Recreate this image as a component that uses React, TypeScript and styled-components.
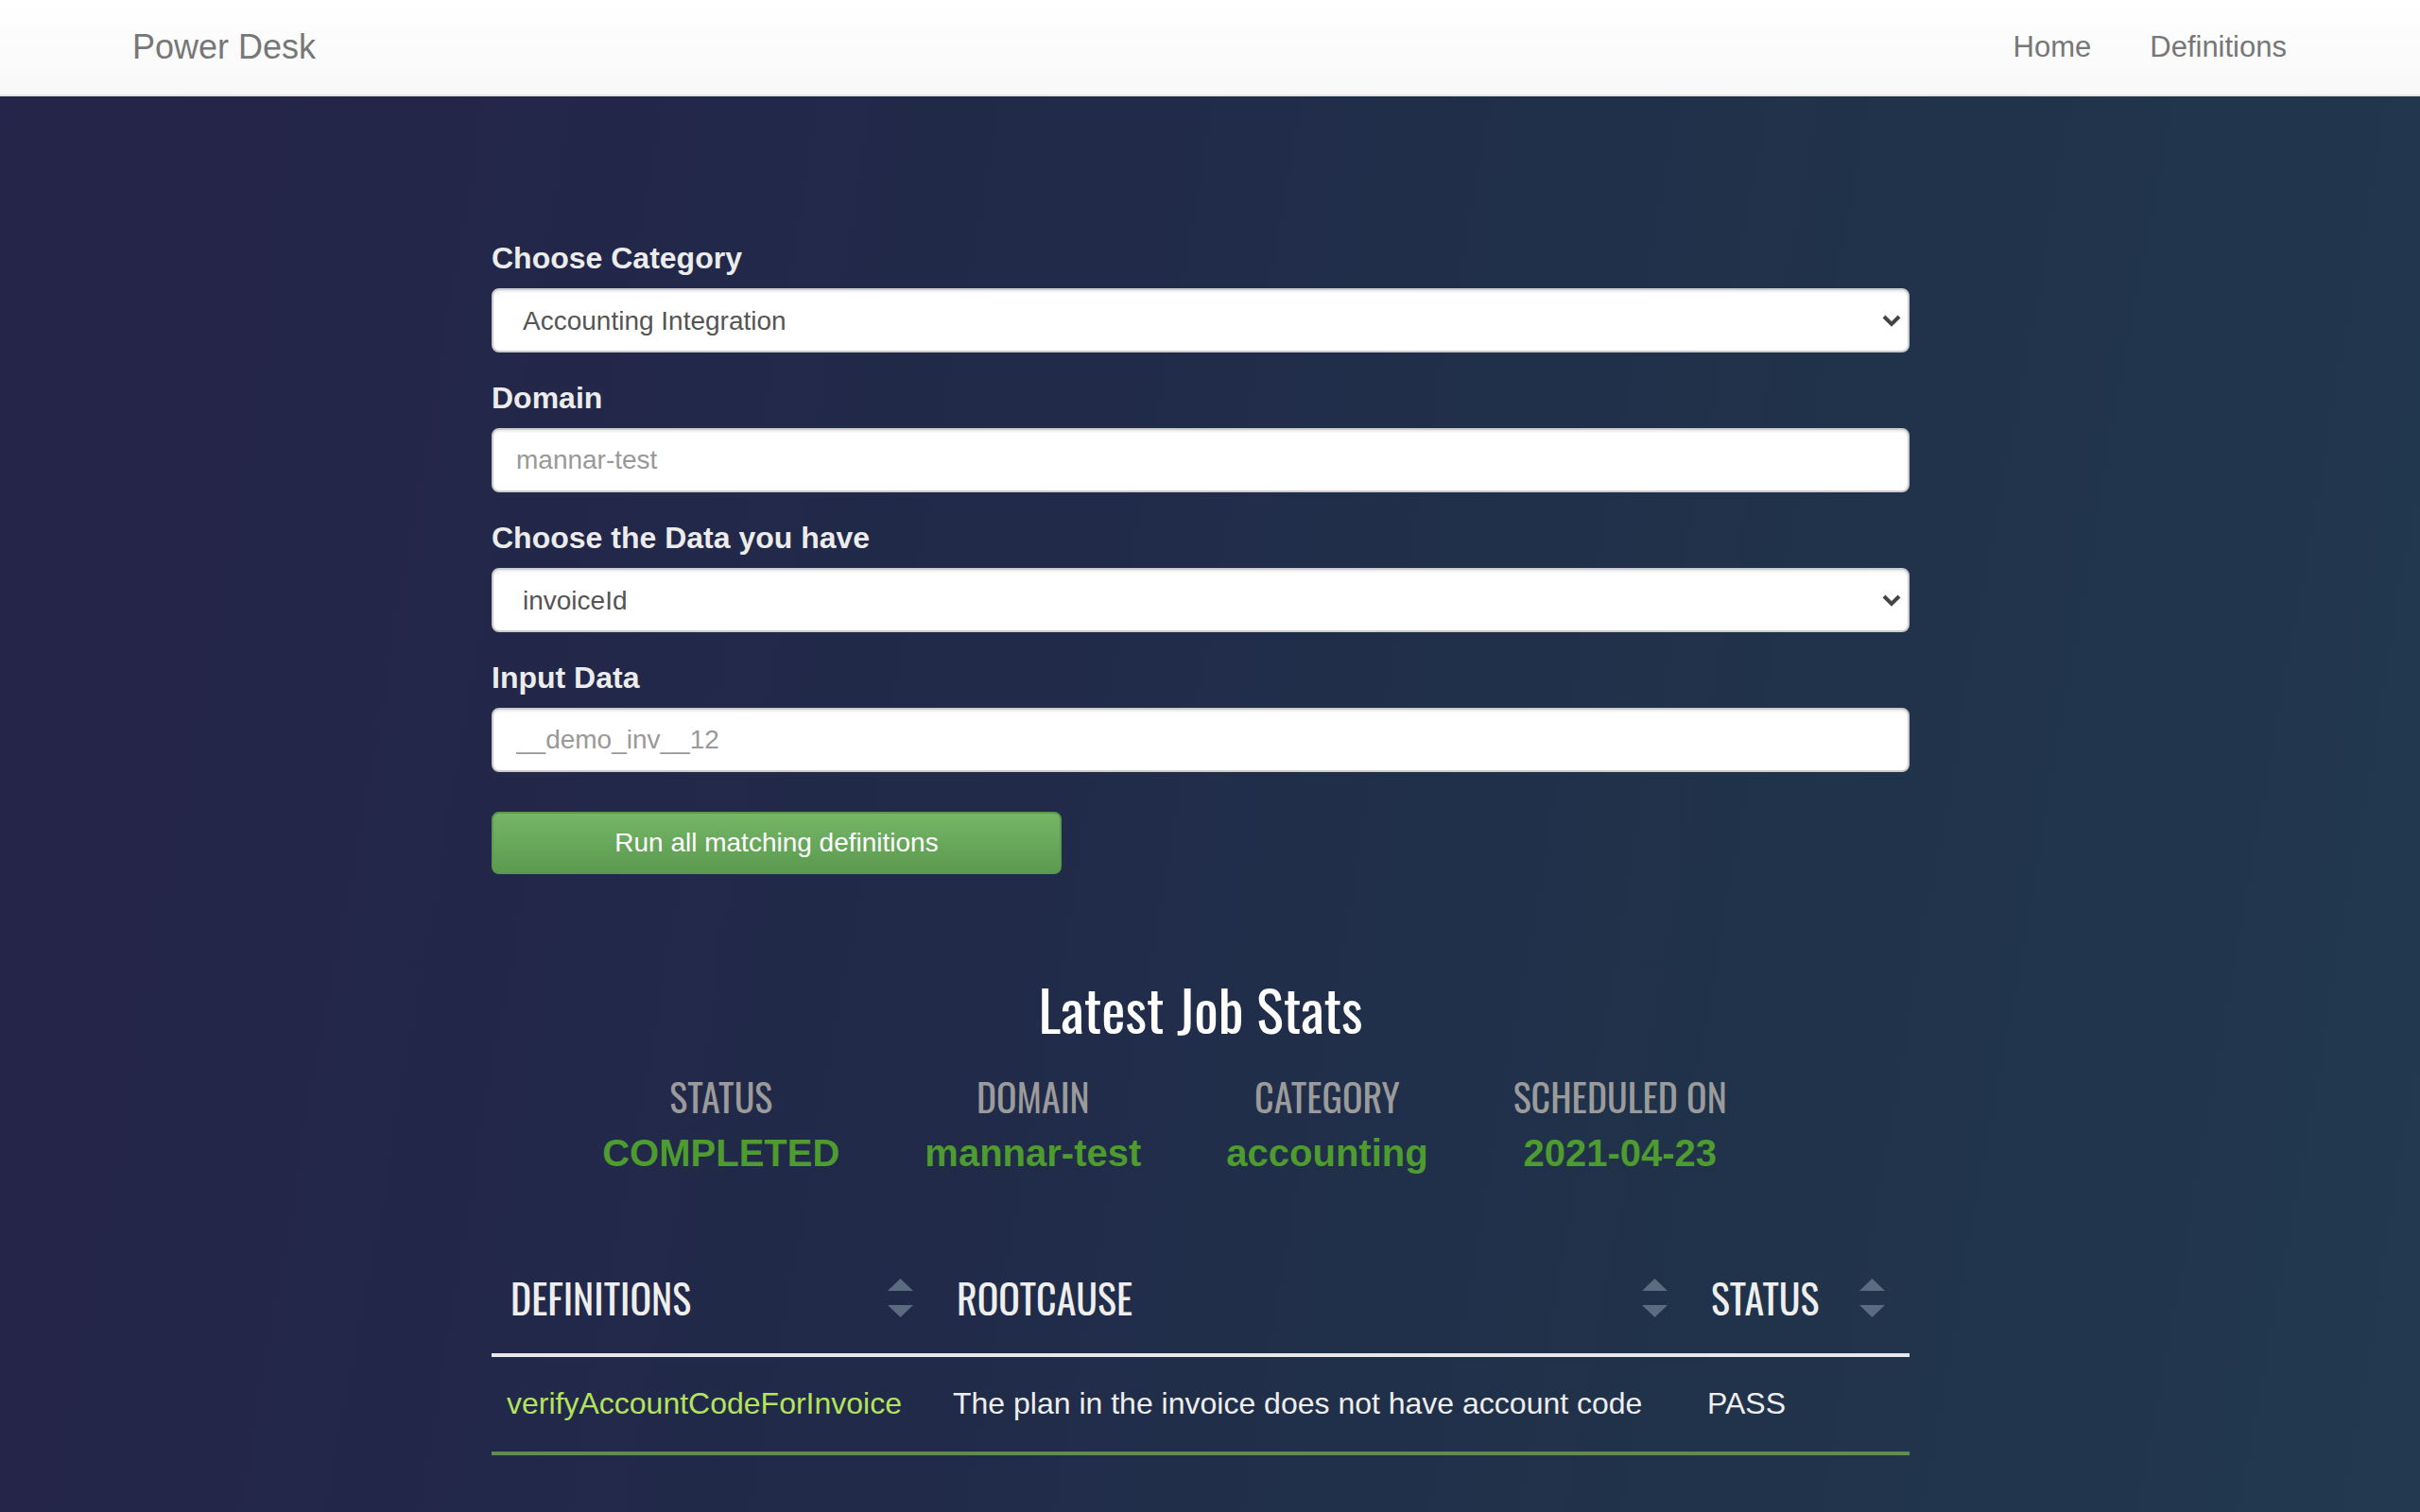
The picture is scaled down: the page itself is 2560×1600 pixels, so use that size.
import React from 'react';
import styled, { createGlobalStyle } from 'styled-components';

const GlobalStyle = createGlobalStyle`
  html, body {
    margin: 0;
    padding: 0;
  }
  body {
    min-height: 100vh;
    font-family: "Liberation Sans", Arial, sans-serif;
    background: linear-gradient(100deg, #25244a 0%, #212a49 40%, #20324a 70%, #22394f 100%);
    background-attachment: fixed;
  }
  * {
    box-sizing: border-box;
  }
`;

const condensed = `"Oswald", "Liberation Sans Narrow", "Arial Narrow", "DejaVu Sans Condensed", sans-serif`;

const NavBar = styled.nav`
  height: 102px;
  display: flex;
  align-items: center;
  justify-content: space-between;
  padding: 0 110px;
  background: linear-gradient(to bottom, #ffffff 0%, #f8f8f8 100%);
  border-bottom: 2px solid #e4e4e4;
`;

const Brand = styled.a`
  padding: 0 30px;
  font-size: 36px;
  color: #777;
  text-decoration: none;
`;

const NavLinks = styled.div`
  display: flex;
`;

const NavLink = styled.a`
  padding: 0 31px;
  font-size: 31px;
  color: #777;
  text-decoration: none;
`;

const Main = styled.main`
  padding: 149px 20px 0 0;
`;

const Container = styled.div`
  width: 1500px;
  margin: 0 auto;
`;

const FormGroup = styled.div`
  margin-bottom: 26px;
`;

const Label = styled.label`
  display: block;
  margin-bottom: 10px;
  font-size: 32px;
  line-height: 44px;
  font-weight: 700;
  color: #ececec;
`;

const controlBase = `
  width: 100%;
  height: 68px;
  border: 2px solid #cccccc;
  border-radius: 8px;
  background: #fff;
  box-shadow: inset 0 2px 2px rgba(0, 0, 0, 0.075);
  font-family: "Liberation Sans", Arial, sans-serif;
  font-size: 28px;
  color: #555;
  outline: none;
`;

const SelectWrap = styled.div`
  position: relative;
`;

const Select = styled.select`
  ${controlBase}
  appearance: none;
  -webkit-appearance: none;
  padding: 0 60px 0 31px;
`;

const Chevron = styled.svg`
  position: absolute;
  right: 9px;
  top: 27px;
  pointer-events: none;
`;

const Input = styled.input`
  ${controlBase}
  padding: 0 24px;
  &::placeholder {
    color: #999;
  }
`;

const RunButton = styled.button`
  display: block;
  width: 603px;
  height: 66px;
  margin-top: 42px;
  border: 2px solid #5b994f;
  border-radius: 8px;
  background: linear-gradient(to bottom, #75b667 0%, #5b9a4f 100%);
  color: #fff;
  font-family: "Liberation Sans", Arial, sans-serif;
  font-size: 28px;
  cursor: pointer;
`;

const StatsTitle = styled.h2`
  margin: 108px 0 0;
  text-align: center;
  font-family: ${condensed};
  font-weight: 400;
  font-size: 60px;
  line-height: 68px;
  color: #fff;
`;

const StatsRow = styled.div`
  display: flex;
  justify-content: center;
  margin-top: 34px;
  padding-left: 14px;
`;

const StatItem = styled.div`
  margin-right: 90px;
  text-align: center;
`;

const StatLabel = styled.div`
  font-family: ${condensed};
  font-size: 40px;
  line-height: 50px;
  color: #9b9b9b;
  text-transform: uppercase;
`;

const StatValue = styled.div`
  margin-top: 7px;
  font-size: 40px;
  line-height: 56px;
  font-weight: 700;
  color: #4e9b2f;
`;

const Table = styled.table`
  width: 100%;
  margin-top: 60px;
  border-collapse: collapse;
`;

const HeadCell = styled.th<{ $width: number }>`
  width: ${(p) => p.$width}px;
  padding: 40px 26px 34px 20px;
  border-bottom: 4px solid #e8e8e8;
  text-align: left;
  font-weight: 400;
`;

const HeadInner = styled.div`
  display: flex;
  align-items: center;
  justify-content: space-between;
  font-family: ${condensed};
  font-size: 42px;
  line-height: 50px;
  color: #eeeeee;
`;

const BodyCell = styled.td<{ $accent?: boolean }>`
  padding: 25px 16px 27px;
  border-bottom: 4px solid #628a55;
  font-size: 32px;
  line-height: 48px;
  color: ${(p) => (p.$accent ? '#b4e35c' : '#eeeeee')};
  white-space: nowrap;
`;

const SortIcon = () => (
  <svg width="27" height="41" viewBox="0 0 27 41">
    <polygon points="0,13 13.5,0 27,13" fill="#5b6b80" />
    <polygon points="0,28 27,28 13.5,41" fill="#5b6b80" />
  </svg>
);

const stats = [
  { label: 'Status', value: 'COMPLETED' },
  { label: 'Domain', value: 'mannar-test' },
  { label: 'Category', value: 'accounting' },
  { label: 'Scheduled On', value: '2021-04-23' },
];

const columns = [
  { title: 'DEFINITIONS', width: 472 },
  { title: 'ROOTCAUSE', width: 798 },
  { title: 'STATUS', width: 230 },
];

const ChevronIcon = () => (
  <Chevron width="20" height="14" viewBox="0 0 20 14">
    <polyline points="2,3 10,11 18,3" fill="none" stroke="#444" strokeWidth="4" />
  </Chevron>
);

const App: React.FC = () => (
  <>
    <GlobalStyle />
    <NavBar>
      <Brand href="#">Power Desk</Brand>
      <NavLinks>
        <NavLink href="#">Home</NavLink>
        <NavLink href="#">Definitions</NavLink>
      </NavLinks>
    </NavBar>
    <Main>
      <Container>
        <FormGroup>
          <Label>Choose Category</Label>
          <SelectWrap>
            <Select defaultValue="accounting">
              <option value="accounting">Accounting Integration</option>
            </Select>
            <ChevronIcon />
          </SelectWrap>
        </FormGroup>
        <FormGroup>
          <Label>Domain</Label>
          <Input placeholder="mannar-test" />
        </FormGroup>
        <FormGroup>
          <Label>Choose the Data you have</Label>
          <SelectWrap>
            <Select defaultValue="invoiceId">
              <option value="invoiceId">invoiceId</option>
            </Select>
            <ChevronIcon />
          </SelectWrap>
        </FormGroup>
        <FormGroup>
          <Label>Input Data</Label>
          <Input placeholder="__demo_inv__12" />
        </FormGroup>
        <RunButton type="button">Run all matching definitions</RunButton>

        <StatsTitle>Latest Job Stats</StatsTitle>
        <StatsRow>
          {stats.map((s) => (
            <StatItem key={s.label}>
              <StatLabel>{s.label}</StatLabel>
              <StatValue>{s.value}</StatValue>
            </StatItem>
          ))}
        </StatsRow>

        <Table>
          <thead>
            <tr>
              {columns.map((c) => (
                <HeadCell key={c.title} $width={c.width}>
                  <HeadInner>
                    {c.title}
                    <SortIcon />
                  </HeadInner>
                </HeadCell>
              ))}
            </tr>
          </thead>
          <tbody>
            <tr>
              <BodyCell $accent>verifyAccountCodeForInvoice</BodyCell>
              <BodyCell>The plan in the invoice does not have account code</BodyCell>
              <BodyCell>PASS</BodyCell>
            </tr>
          </tbody>
        </Table>
      </Container>
    </Main>
  </>
);

export default App;
